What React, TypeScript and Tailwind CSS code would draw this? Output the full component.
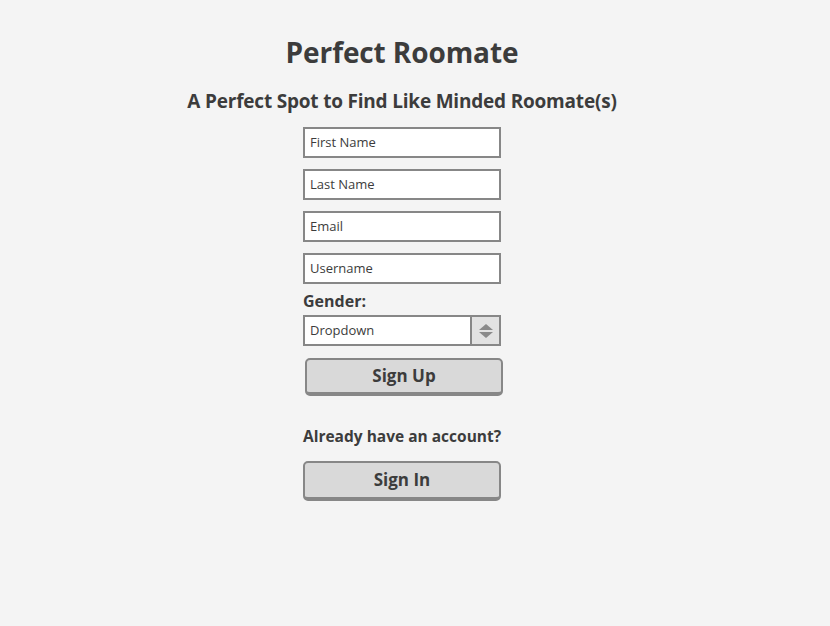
import React from 'react'

const font = { fontFamily: '"Open Sans", "Noto Sans", sans-serif' }

function Field({ label }: { label: string }) {
  return (
    <div className="flex h-[31px] w-[198px] items-center border-2 border-[#878787] bg-white px-[5px] text-[13px] text-[#3c3c3c]">
      {label}
    </div>
  )
}

function Btn({ label, className }: { label: string; className?: string }) {
  return (
    <button
      type="button"
      className={`flex w-[198px] items-center justify-center rounded-[5px] border-2 border-b-[4px] border-[#878787] bg-[#d9d9d9] text-[17px] font-bold text-[#3c3c3c] ${className ?? ''}`}
    >
      {label}
    </button>
  )
}

export default function App() {
  return (
    <div className="min-h-[626px] w-full bg-[#f4f4f4]" style={font}>
      <div className="flex w-[804px] flex-col items-center pt-[33px]">
        <h1 className="text-[28px] font-bold leading-[38px] tracking-[-0.1px] text-[#3c3c3c]">
          Perfect Roomate
        </h1>
        <h2 className="mt-[17px] text-[19px] font-bold leading-[26px] tracking-[-0.2px] text-[#3c3c3c]">
          A Perfect Spot to Find Like Minded Roomate(s)
        </h2>
        <div className="mt-[13px] flex w-[198px] flex-col">
          <div className="flex flex-col gap-[11px]">
            <Field label="First Name" />
            <Field label="Last Name" />
            <Field label="Email" />
            <Field label="Username" />
          </div>
          <div className="mt-[6px] text-[16px] font-bold leading-[22px] text-[#3c3c3c]">
            Gender:
          </div>
          <div className="mt-[3px] flex h-[31px] w-[198px] border-2 border-[#878787] bg-white text-[13px] text-[#3c3c3c]">
            <div className="flex flex-1 items-center px-[5px]">Dropdown</div>
            <div className="flex w-[29px] items-center justify-center border-l-2 border-[#878787] bg-[#e2e2e2]">
              <svg width="16" height="16" viewBox="0 0 16 16">
                <path d="M8 1 L15 7 L1 7 Z" fill="#8a8a8a" />
                <path d="M1 9 L15 9 L8 15 Z" fill="#8a8a8a" />
              </svg>
            </div>
          </div>
          <Btn label="Sign Up" className="ml-[2px] mt-[12px] h-[38px]" />
          <div className="mt-[29px] whitespace-nowrap text-[15.5px] font-bold leading-[22px] text-[#3c3c3c]">
            Already have an account?
          </div>
          <Btn label="Sign In" className="mt-[14px] h-[40px]" />
        </div>
      </div>
    </div>
  )
}
